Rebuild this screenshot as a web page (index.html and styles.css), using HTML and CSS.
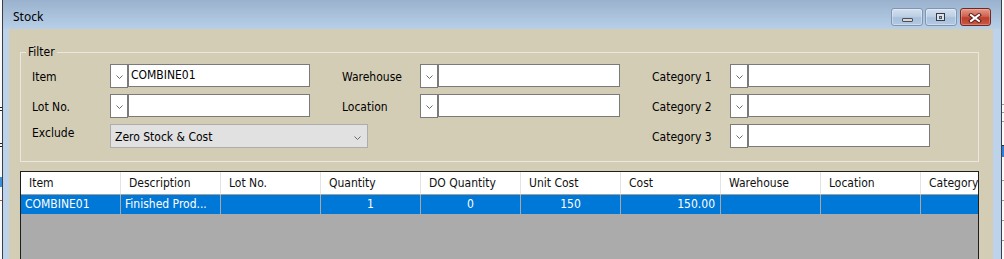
FILE: index.html
```html
<!DOCTYPE html>
<html>
<head>
<meta charset="utf-8">
<title>Stock</title>
<link rel="stylesheet" href="styles.css">
</head>
<body>
<div class="screen">
  <div class="backdrop backdrop-left"></div>
  <div class="window">
    <div class="titlebar">
      <span class="title">Stock</span>
      <div class="caption-buttons">
        <div class="cap cap-min"><span class="min-glyph"></span></div>
        <div class="cap cap-max"><span class="max-glyph"><span class="max-inner"></span></span></div>
        <div class="cap cap-close">
          <svg width="14" height="10" viewBox="0 0 14 10"><path d="M3 2 L11 8 M11 2 L3 8" stroke="#5a1d16" stroke-width="4" stroke-linecap="square" fill="none"/><path d="M3 2 L11 8 M11 2 L3 8" stroke="#ffffff" stroke-width="2" stroke-linecap="square" fill="none"/></svg>
        </div>
      </div>
    </div>
    <div class="client">
      <fieldset class="filter">
        <legend>Filter</legend>
        <div class="filter-grid">
          <div class="field"><span class="lbl">Item</span><span class="dd"><svg width="7" height="4" viewBox="0 0 7 4"><path d="M0.5 0.5 L3.5 3.5 L6.5 0.5" fill="none" stroke="#6b6b6b"/></svg></span><span class="textbox">COMBINE01</span></div>
          <div class="field"><span class="lbl">Warehouse</span><span class="dd"><svg width="7" height="4" viewBox="0 0 7 4"><path d="M0.5 0.5 L3.5 3.5 L6.5 0.5" fill="none" stroke="#6b6b6b"/></svg></span><span class="textbox"></span></div>
          <div class="field"><span class="lbl">Category 1</span><span class="dd"><svg width="7" height="4" viewBox="0 0 7 4"><path d="M0.5 0.5 L3.5 3.5 L6.5 0.5" fill="none" stroke="#6b6b6b"/></svg></span><span class="textbox"></span></div>
          <div class="field"><span class="lbl">Lot No.</span><span class="dd"><svg width="7" height="4" viewBox="0 0 7 4"><path d="M0.5 0.5 L3.5 3.5 L6.5 0.5" fill="none" stroke="#6b6b6b"/></svg></span><span class="textbox"></span></div>
          <div class="field"><span class="lbl">Location</span><span class="dd"><svg width="7" height="4" viewBox="0 0 7 4"><path d="M0.5 0.5 L3.5 3.5 L6.5 0.5" fill="none" stroke="#6b6b6b"/></svg></span><span class="textbox"></span></div>
          <div class="field"><span class="lbl">Category 2</span><span class="dd"><svg width="7" height="4" viewBox="0 0 7 4"><path d="M0.5 0.5 L3.5 3.5 L6.5 0.5" fill="none" stroke="#6b6b6b"/></svg></span><span class="textbox"></span></div>
          <div class="field field-wide"><span class="lbl lbl-top">Exclude</span><span class="combo"><span class="combo-text">Zero Stock &amp; Cost</span><svg width="7" height="4" viewBox="0 0 7 4"><path d="M0.5 0.5 L3.5 3.5 L6.5 0.5" fill="none" stroke="#6b6b6b"/></svg></span></div>
          <div class="field"><span class="lbl">Category 3</span><span class="dd"><svg width="7" height="4" viewBox="0 0 7 4"><path d="M0.5 0.5 L3.5 3.5 L6.5 0.5" fill="none" stroke="#6b6b6b"/></svg></span><span class="textbox"></span></div>
        </div>
      </fieldset>
      <div class="grid">
        <div class="grid-row grid-head">
          <div class="cell">Item</div>
          <div class="cell">Description</div>
          <div class="cell">Lot No.</div>
          <div class="cell">Quantity</div>
          <div class="cell">DO Quantity</div>
          <div class="cell">Unit Cost</div>
          <div class="cell">Cost</div>
          <div class="cell">Warehouse</div>
          <div class="cell">Location</div>
          <div class="cell">Category</div>
        </div>
        <div class="grid-row grid-sel">
          <div class="cell">COMBINE01</div>
          <div class="cell">Finished Prod...</div>
          <div class="cell"></div>
          <div class="cell num-center">1</div>
          <div class="cell num-center">0</div>
          <div class="cell num-center">150</div>
          <div class="cell num-right">150.00</div>
          <div class="cell"></div>
          <div class="cell"></div>
          <div class="cell"></div>
        </div>
      </div>
    </div>
  </div>
  <div class="backdrop backdrop-right"></div>
</div>
</body>
</html>
```
FILE: styles.css
```css
* { box-sizing: border-box; }
html, body { margin: 0; padding: 0; }
body {
  width: 1004px;
  height: 259px;
  overflow: hidden;
  background: #fafafa;
  font-family: "DejaVu Sans Condensed", "DejaVu Sans", sans-serif;
  font-size: 12px;
  color: #000;
}
.screen {
  display: flex;
  width: 1004px;
  height: 259px;
  overflow: hidden;
}
.backdrop { width: 2px; flex: none; }
.backdrop-left {
  background:
    linear-gradient(#222, #222) 0 107px / 2px 1px no-repeat,
    linear-gradient(#222, #222) 0 110px / 2px 1px no-repeat,
    linear-gradient(#222, #222) 0 143px / 2px 1px no-repeat,
    linear-gradient(#222, #222) 0 146px / 2px 1px no-repeat,
    linear-gradient(#3c8ddb, #3c8ddb) 0 177px / 2px 10px no-repeat,
    linear-gradient(#b5562f, #b5562f) 0 200px / 2px 1px no-repeat,
    #fafafa;
}
.backdrop-right {
  background:
    linear-gradient(#9a9a9a, #9a9a9a) 0 104px / 2px 1px no-repeat,
    linear-gradient(#9a9a9a, #9a9a9a) 0 112px / 2px 1px no-repeat,
    linear-gradient(#9a9a9a, #9a9a9a) 0 121px / 2px 1px no-repeat,
    linear-gradient(#333, #333) 0 145px / 2px 1px no-repeat,
    linear-gradient(#2f7fd6, #2f7fd6) 0 146px / 2px 11px no-repeat,
    linear-gradient(#9a9a9a, #9a9a9a) 0 180px / 2px 1px no-repeat,
    linear-gradient(#9a9a9a, #9a9a9a) 0 200px / 2px 1px no-repeat,
    linear-gradient(#9a9a9a, #9a9a9a) 0 220px / 2px 1px no-repeat,
    linear-gradient(#9a9a9a, #9a9a9a) 0 240px / 2px 1px no-repeat,
    #fafafa;
}
.window {
  width: 1000px;
  flex: none;
  display: flex;
  flex-direction: column;
  border-left: 1px solid #3a3f45;
  border-right: 1px solid #3a3f45;
  padding: 0 8px 0 6px;
  background: linear-gradient(to bottom, #9ab2cd 0, #b8cfe8 29px, #bdd3ec 29px, #bdd3ec 100%);
}
.titlebar {
  height: 29px;
  flex: none;
  display: flex;
  align-items: flex-start;
  padding-left: 4px;
}
.title {
  font-family: "Noto Sans", sans-serif;
  font-size: 12px;
  line-height: 16px;
  padding-top: 9px;
  color: #000;
}
.caption-buttons {
  margin-left: auto;
  margin-right: 2px;
  margin-top: 8px;
  display: flex;
}
.cap {
  height: 18px;
  border-radius: 3px;
  display: flex;
  align-items: center;
  justify-content: center;
}
.cap-min, .cap-max {
  width: 32px;
  border: 1px solid #7f95b1;
  background: linear-gradient(to bottom, #d3e0ef 0, #bdd0e6 45%, #a9c0db 55%, #b3c9e2 100%);
  box-shadow: inset 0 0 0 1px rgba(255, 255, 255, 0.35);
}
.cap-max { margin-left: 2px; }
.cap-close {
  width: 31px;
  margin-left: 3px;
  border: 1px solid #6e2a22;
  background: linear-gradient(to bottom, #e39a8b 0, #d06452 45%, #bb3f2d 55%, #c95a42 100%);
  box-shadow: inset 0 0 0 1px rgba(255, 200, 190, 0.35);
}
.cap-close svg { display: block; margin-left: -2px; margin-top: 1px; }
.min-glyph {
  display: block;
  width: 11px;
  height: 4px;
  margin-top: 6px;
  border: 1px solid #4a4f57;
  border-radius: 1px;
  background: #d8d8d8;
}
.max-glyph {
  display: block;
  width: 9px;
  height: 8px;
  margin-left: -2px;
  border: 1px solid #333a44;
  background: #dde2e8;
  padding: 2px 2px 1px;
}
.max-inner {
  display: block;
  width: 100%;
  height: 100%;
  border: 1px solid #4f5866;
  background: #a7bcd5;
}
.client {
  flex: none;
  height: 240px;
  background: #d4cdb6;
  padding-top: 16px;
  display: flex;
  flex-direction: column;
}
.filter {
  margin: 0 0 0 11px;
  width: 959px;
  min-width: 0;
  border: 1px solid #ebe7dc;
  padding: 4px 0 13px 0;
}
.filter legend {
  margin-left: 5px;
  padding: 0 2px;
  line-height: 15px;
  font-size: 12px;
}
.filter-grid {
  display: grid;
  grid-template-columns: repeat(3, 278px);
  column-gap: 32px;
  row-gap: 6px;
  padding-left: 11px;
}
.field {
  display: flex;
  align-items: flex-start;
  height: 24px;
}
.field-wide { grid-column: span 2; }
.lbl {
  flex: none;
  width: 78px;
  line-height: 24px;
  padding-top: 1px;
  white-space: nowrap;
}
.lbl-top { line-height: 18px; padding-top: 0; }
.dd {
  flex: none;
  width: 18px;
  height: 24px;
  border: 1px solid #7a7a7a;
  background: #fff;
  display: flex;
  align-items: center;
  justify-content: center;
}
.dd svg { display: block; margin-top: 1px; }
.textbox {
  flex: none;
  width: 182px;
  height: 23px;
  border: 1px solid #7a7a7a;
  background: #fff;
  padding-left: 2px;
  line-height: 21px;
  white-space: nowrap;
  overflow: hidden;
}
.combo {
  flex: none;
  width: 258px;
  height: 24px;
  border: 1px solid #adadad;
  background: #e1e1e1;
  display: flex;
  align-items: center;
  padding: 0 6px 0 4px;
}
.combo-text { line-height: 22px; padding-top: 1px; }
.combo svg { display: block; margin-left: auto; margin-top: 3px; }
.grid {
  margin: 9px 0 0 11px;
  width: 959px;
  flex: 1;
  border: 1px solid #1e1e1e;
  background: #ababab;
  overflow: hidden;
}
.grid-row { display: flex; }
.cell {
  flex: none;
  width: 100px;
  white-space: nowrap;
  overflow: hidden;
}
.grid-head .cell {
  height: 23px;
  line-height: 22px;
  background: #fff;
  border-right: 1px solid #e3e3e3;
  border-bottom: 1px solid #a0a0a0;
  padding-left: 8px;
  color: #111;
}
.grid-sel .cell {
  height: 19px;
  line-height: 19px;
  background: #0078d7;
  color: #fff;
  border-right: 1px solid #a8a8a8;
  padding: 0 4px;
}
.grid-sel .num-center { text-align: center; }
.grid-sel .num-right { text-align: right; padding-right: 5px; }
```
